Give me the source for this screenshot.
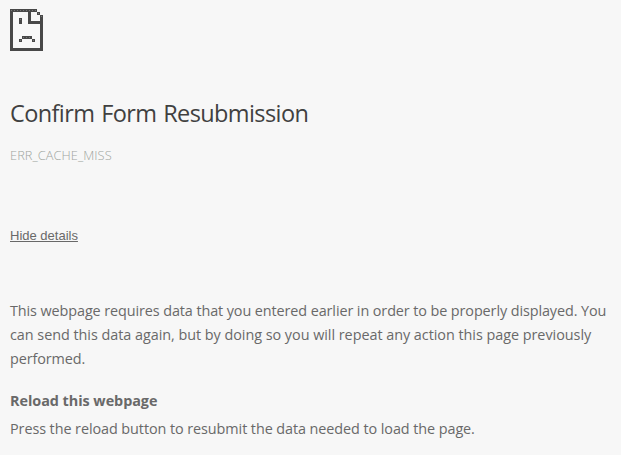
export default function App() {
  return (
    <main className="h-[455px] w-[621px] overflow-hidden bg-[#f7f7f7] pl-[10px] pt-[9px] font-['Open_Sans',sans-serif] text-[#696969]">
      <svg className="block h-[42px] w-[33px]" viewBox="0 0 33 42" shapeRendering="crispEdges" fill="#484848">
        <path d="M0 0H27V3H3V39H30V15H18V3H21V12H30V6H33V42H0Z" />
        <path d="M27 3h3v3h-3zM9 9h3v6H9zM12 27h10v3H12zM9 30h3v3H9zM22 30h3v3h-3z" />
        <path d="M1 1.5H27M28 4.5h1M31 7.5h1M10 10.5h1M13 28.5h9M10 31.5h1M23 31.5h1" stroke="#777" strokeDasharray="1 2" fill="none" />
      </svg>
      <h1 className="mt-[43px] h-[38px] whitespace-nowrap text-[23.5px] leading-[38px] tracking-[-0.6px] [word-spacing:1.3px] text-[#404040]">
        Confirm Form Resubmission
      </h1>
      <p className="mt-[13px] h-[20px] text-[12.8px] font-light leading-[20px] tracking-[0.06px] text-[#9fa69f]">ERR_CACHE_MISS</p>
      <button className="mt-[61px] block h-[20px] font-['Liberation_Sans',sans-serif] text-[13px] leading-[20px] text-[#696969] underline">Hide details</button>
      <div className="mt-[53px] whitespace-nowrap text-[14.4px] leading-[24px]">
        <p className="tracking-[-0.093px]">This webpage requires data that you entered earlier in order to be properly displayed. You</p>
        <p className="tracking-[-0.035px]">can send this data again, but by doing so you will repeat any action this page previously</p>
        <p className="tracking-[-0.1px]">performed.</p>
      </div>
      <h2 className="mt-[18px] text-[14.4px] font-bold leading-[24px] tracking-[-0.04px]">Reload this webpage</h2>
      <p className="mt-[4px] whitespace-nowrap text-[14.4px] leading-[24px] tracking-[-0.075px]">Press the reload button to resubmit the data needed to load the page.</p>
    </main>
  );
}
